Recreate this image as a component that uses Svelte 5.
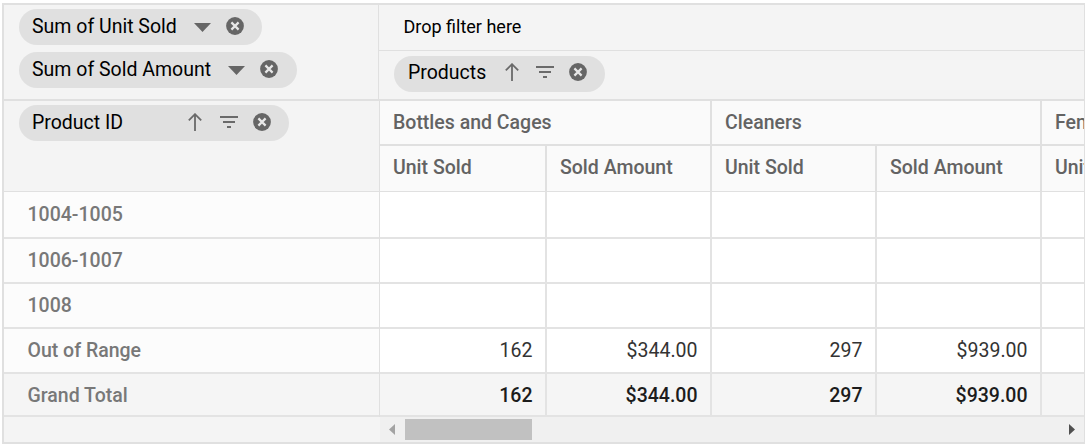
<script>
  const groups = [
    { name: 'Bottles and Cages', unit: '162', amount: '$344.00' },
    { name: 'Cleaners', unit: '297', amount: '$939.00' },
    { name: 'Fenders', unit: '', amount: '' }
  ];
  const rows = ['1004-1005', '1006-1007', '1008', 'Out of Range', 'Grand Total'];
</script>

{#snippet close()}
  <svg class="icon" width="18" height="18" viewBox="0 0 18 18">
    <circle cx="9" cy="9" r="8.9" fill="#666" />
    <path d="M5.4 5.4l7.2 7.2M12.6 5.4l-7.2 7.2" stroke="#e8e8e8" stroke-width="2.2" />
  </svg>
{/snippet}

{#snippet caret()}
  <svg class="icon caret" width="17" height="9" viewBox="0 0 17 9"><path d="M0 0h17L8.5 9z" fill="#666" /></svg>
{/snippet}

{#snippet sortFilter()}
  <svg class="icon sort" width="14" height="18" viewBox="0 0 14 18">
    <path d="M7 18V1.5M.8 7.4L7 1.2l6.2 6.2" fill="none" stroke="#6a6a6a" stroke-width="1.8" />
  </svg>
  <svg class="icon filter" width="18" height="12" viewBox="0 0 18 12">
    <path d="M0 1h18M3 6h12M7 11h4" fill="none" stroke="#6a6a6a" stroke-width="1.8" />
  </svg>
{/snippet}

<div class="pivot">
  <div class="top">
    <div class="values">
      <div class="chip unit"><span>Sum of Unit Sold</span>{@render caret()}{@render close()}</div>
      <div class="chip amount"><span>Sum of Sold Amount</span>{@render caret()}{@render close()}</div>
    </div>
    <div class="axes">
      <div class="drop"><span>Drop filter here</span></div>
      <div class="columns">
        <div class="chip products"><span>Products</span>{@render sortFilter()}{@render close()}</div>
      </div>
    </div>
  </div>
  <div class="main">
    <div class="left">
      <div class="rowfield">
        <div class="chip product-id"><span>Product ID</span>{@render sortFilter()}{@render close()}</div>
      </div>
      {#each rows as r, i}
        <div class="rh r{i}">{r}</div>
      {/each}
    </div>
    <div class="grid">
      {#each groups as g}
        <div class="group">
          <div class="gh">{g.name}</div>
          <div class="pair sub"><div>Unit Sold</div><div>Sold Amount</div></div>
          {#each rows as r, i}
            <div class="pair val r{i}">
              <div>{i > 2 ? g.unit : ''}</div>
              <div>{i > 2 ? g.amount : ''}</div>
            </div>
          {/each}
        </div>
      {/each}
    </div>
  </div>
  <div class="foot">
    <div class="spacer"></div>
    <div class="scroll">
      <svg width="6" height="11" viewBox="0 0 6 11"><path d="M6 0v11L0 5.5z" fill="#a3a3a3" /></svg>
      <div class="thumb"></div>
      <svg class="next" width="6" height="11" viewBox="0 0 6 11"><path d="M0 0v11l6-5.5z" fill="#505050" /></svg>
    </div>
  </div>
</div>

<style>
  :global(body) { background: #fff; overflow: hidden; }
  .pivot {
    box-sizing: border-box;
    width: 1083px;
    height: 441px;
    margin: 3px 0 0 2px;
    border: 2px solid #e0e0e0;
    border-right-width: 1px;
    background: #f4f4f4;
    font-family: Roboto, sans-serif;
    font-size: 19.5px;
    line-height: 24px;
    overflow: hidden;
    white-space: nowrap;
  }
  .pivot div { box-sizing: border-box; }
  .top { display: flex; height: 96px; border-bottom: 2px solid #e0e0e0; }
  .values {
    width: 375px;
    padding: 4px 0 0 15px;
    border-right: 1px solid #e0e0e0;
    display: flex;
    flex-direction: column;
    gap: 7px;
  }
  .axes { flex: 1; }
  .drop { height: 46px; padding: 10px 0 0 24.5px; border-bottom: 1px solid #e0e0e0; font-size: 18px; color: #000; }
  .columns { padding: 5px 0 0 15px; }
  .chip {
    display: flex;
    align-items: center;
    height: 36px;
    border-radius: 18px;
    padding: 0 18px 0 13px;
    background: #e0e0e0;
    color: #000;
  }
  .chip span { flex: 1; }
  .icon { display: block; flex: none; margin-top: -2px; }
  .caret { margin-top: 0; margin-right: 15px; }
  .sort { margin-right: 17.5px; }
  .filter { margin-right: 15px; }
  .unit { width: 243px; }
  .amount { width: 278px; padding-right: 19px; }
  .products { width: 211px; padding: 0 18px 2px 14px; }
  .product-id { width: 270px; padding-right: 18.5px; }

  .main { display: flex; height: 316px; }
  .left { width: 376px; flex: none; border-right: 1px solid #e0e0e0; }
  .rowfield { height: 91px; border-bottom: 1px solid #e0e0e0; padding: 4px 0 0 15px; }
  .rh {
    height: 45px;
    padding: 10px 0 0 23.5px;
    border-bottom: 2px solid #e3e3e3;
    background: #fcfcfc;
    color: #787878;
    font-weight: 500;
  }
  .grid { display: flex; flex: 1; overflow: hidden; }
  .group { width: 330px; flex: none; }
  .group:first-child { width: 332px; }
  .gh {
    height: 45px;
    padding: 10px 0 0 13px;
    border-right: 2px solid #e0e0e0;
    border-bottom: 2px solid #e0e0e0;
    background: #fafafa;
    color: #636363;
    font-weight: 500;
  }
  .pair { display: flex; height: 45px; background: #fff; }
  .pair > div { width: 165px; flex: none; border-right: 2px solid #e3e3e3; border-bottom: 2px solid #e3e3e3; padding: 10px 12.5px 0 13px; }
  .group:first-child .pair > div:first-child { width: 167px; }
  .sub { height: 46px; background: #fafafa; }
  .pair.sub > div { border-color: #e0e0e0; border-bottom-width: 1px; color: #636363; font-weight: 500; }
  .val { text-align: right; color: #333; }
  .r0 { height: 47px; }
  .rh.r0 { padding-top: 11px; }
  .r4 { height: 43px; background: #f5f5f5; }
  .val.r4 { font-weight: 500; color: #1c1c1c; }

  .foot { display: flex; height: 25px; }
  .spacer { width: 376px; }
  .scroll { flex: 1; display: flex; align-items: center; background: #f0f0f0; padding: 0 9px; }
  .thumb { width: 127px; height: 21px; margin-left: 10px; background: #c1c1c1; }
  .next { margin-left: auto; }
</style>
